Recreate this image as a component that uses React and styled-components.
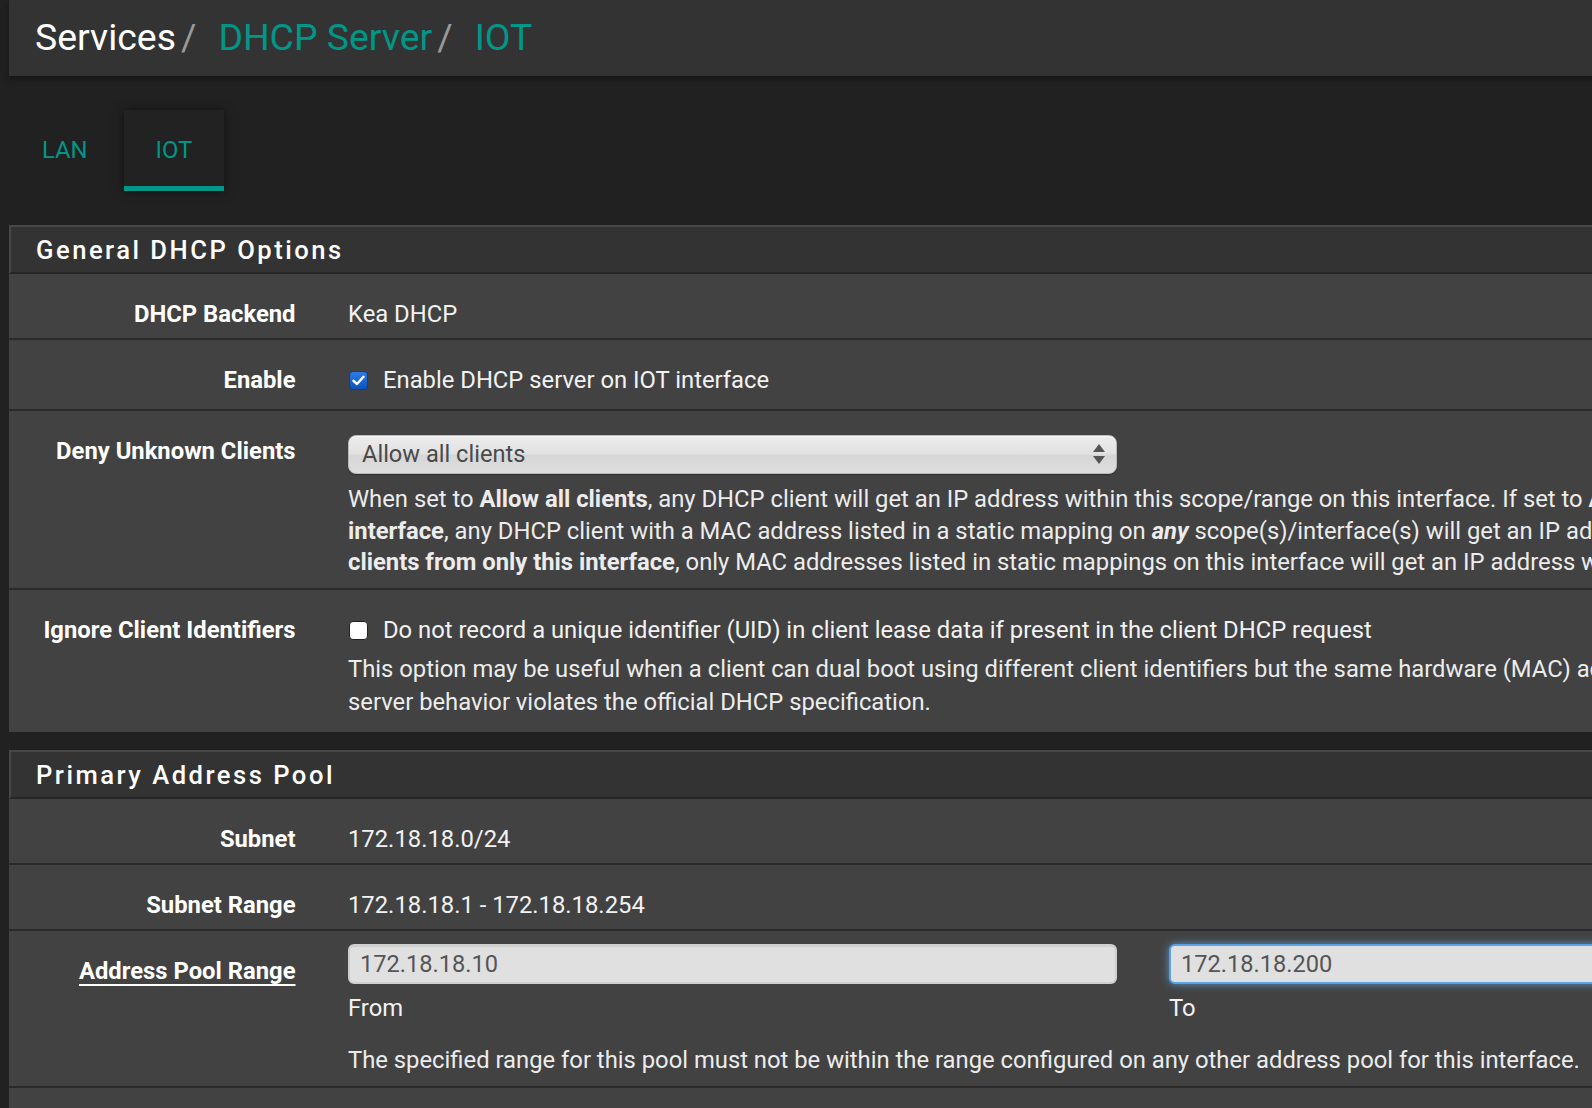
import React from 'react';
import styled, { createGlobalStyle, css } from 'styled-components';

const GlobalStyle = createGlobalStyle`
  html, body {
    margin: 0;
    padding: 0;
    background: #212121;
    overflow: hidden;
  }
  body {
    font-family: Roboto, "Liberation Sans", Arial, sans-serif;
    font-size: 23.8px;
    line-height: 32px;
    color: #ececec;
  }
  * { box-sizing: border-box; }
`;

const TEAL = '#009688';

const Page = styled.div`
  min-width: 2000px;
  min-height: 1108px;
  padding-left: 9px;
  background: #212121;
`;

const HeaderBar = styled.header`
  height: 76px;
  background: #333333;
  display: flex;
  align-items: center;
  padding: 0 0 3px 26px;
  box-shadow: 0 3px 6px rgba(0, 0, 0, 0.35);
  position: relative;
`;

const Crumbs = styled.h1`
  margin: 0;
  font-size: 37.4px;
  font-weight: 400;
  line-height: 44px;
  display: flex;
  align-items: baseline;
`;

const Crumb = styled.span`
  color: ${(p) => (p.$link ? TEAL : '#ffffff')};
`;

const Sep = styled.span`
  color: #9a9a9a;
  margin: 0 22px 0 5px;
`;

const TabNav = styled.nav`
  display: flex;
  gap: 4px;
  margin: 34px 0 34px 1px;
`;

const Tab = styled.div`
  height: 81px;
  padding: 3px 32px 0;
  display: flex;
  align-items: center;
  justify-content: center;
  color: ${TEAL};
  font-size: 23.8px;
  border-bottom: 5px solid transparent;
  ${(p) =>
    p.$active &&
    css`
      background: #222222;
      border-bottom-color: ${TEAL};
      box-shadow: 0 0 10px rgba(0, 0, 0, 0.5);
    `}
`;

const Panel = styled.section`
  margin-bottom: 18px;
  background: #424242;
`;

const PanelHeading = styled.div`
  height: 49px;
  background: #333333;
  border-top: 2px solid #474747;
  border-left: 2px solid #474747;
  border-bottom: 2px solid #262626;
  display: flex;
  align-items: center;
  padding-left: 25px;
`;

const PanelTitle = styled.h2`
  margin: 0;
  font-size: 25.6px;
  font-weight: 500;
  letter-spacing: 2.5px;
  color: #ffffff;
  line-height: 32px;
`;

const Row = styled.div`
  display: grid;
  grid-template-columns: 315px 1fr;
  padding: 13px 0 ${(p) => p.$pb ?? 0}px;
  background: #424242;
  border-bottom: ${(p) => (p.$last ? 'none' : '2px solid #2a2a2a')};
`;

const Label = styled.div`
  text-align: right;
  padding: 11px 28.5px 0 0;
  font-weight: 700;
  color: #ffffff;
  line-height: 32px;
`;

const LabelLink = styled.span`
  text-decoration: underline;
  text-decoration-thickness: 2px;
  text-underline-offset: 5px;
`;

const Value = styled.div`
  padding-left: 24px;
  min-width: 0;
`;

const StaticText = styled.div`
  padding: 11px 0 8px;
  color: #f2f2f2;
`;

const CheckLine = styled.label`
  display: flex;
  align-items: center;
  gap: 15px;
  padding-top: 11px;
  color: #f2f2f2;
`;

const Box = styled.span`
  width: 19px;
  height: 19px;
  margin-left: 1px;
  border-radius: 4px;
  display: inline-flex;
  align-items: center;
  justify-content: center;
  flex-shrink: 0;
  ${(p) =>
    p.$checked
      ? css`
          background: linear-gradient(#2f7be6, #0b52bd);
          border: 1px solid #0a3f94;
        `
      : css`
          background: #ffffff;
          border: 1px solid #222;
        `}
`;

const Help = styled.div`
  margin-top: ${(p) => p.$mt ?? 8}px;
  color: #ececec;
  white-space: nowrap;
  line-height: ${(p) => p.$lh ?? 32}px;
`;

const SelectBox = styled.div`
  width: 769px;
  height: 39px;
  margin-top: 11px;
  border-radius: 8px;
  border: 1px solid #b9b9b9;
  background: linear-gradient(#ececec 0%, #e2e2e2 48%, #d6d6d6 52%, #dedede 100%);
  box-shadow: inset 0 1px 0 rgba(255, 255, 255, 0.7), 0 1px 1px rgba(0, 0, 0, 0.3);
  display: flex;
  align-items: center;
  justify-content: space-between;
  padding: 0 10px 2px 13px;
  color: #4a4a4a;
  font-size: 23.6px;
`;

const InputPair = styled.div`
  display: grid;
  grid-template-columns: 769px 769px;
  column-gap: 52px;
`;

const TextInput = styled.div`
  height: 40px;
  border-radius: 6px;
  background: #e0e0e0;
  border: 2px solid ${(p) => (p.$focus ? '#5aa2e8' : '#cfcfcf')};
  box-shadow: ${(p) =>
    p.$focus ? '0 0 8px rgba(102, 175, 233, 0.75)' : 'inset 0 1px 1px rgba(0,0,0,0.08)'};
  display: flex;
  align-items: center;
  padding-left: 10px;
  color: #555555;
  font-size: 23.6px;
`;

const Caption = styled.div`
  margin-top: 8px;
  color: #f2f2f2;
`;

function Checkbox({ checked }) {
  return (
    <Box $checked={checked}>
      {checked && (
        <svg width="13" height="11" viewBox="0 0 13 11">
          <path d="M1.5 5.8 L5 9 L11.5 1.8" fill="none" stroke="#fff" strokeWidth="2.4" strokeLinecap="round" strokeLinejoin="round" />
        </svg>
      )}
    </Box>
  );
}

function UpDown() {
  return (
    <svg width="14" height="22" viewBox="0 0 14 22">
      <path d="M7 1 L13 9 L1 9 Z" fill="#555" />
      <path d="M7 21 L13 13 L1 13 Z" fill="#555" />
    </svg>
  );
}

export default function App() {
  return (
    <>
      <GlobalStyle />
      <Page>
        <HeaderBar>
          <Crumbs>
            <Crumb>Services</Crumb>
            <Sep>/</Sep>
            <Crumb $link>DHCP Server</Crumb>
            <Sep>/</Sep>
            <Crumb $link>IOT</Crumb>
          </Crumbs>
        </HeaderBar>

        <TabNav>
          <Tab>LAN</Tab>
          <Tab $active>IOT</Tab>
        </TabNav>

        <Panel>
          <PanelHeading>
            <PanelTitle>General DHCP Options</PanelTitle>
          </PanelHeading>

          <Row>
            <Label>DHCP Backend</Label>
            <Value>
              <StaticText>Kea DHCP</StaticText>
            </Value>
          </Row>

          <Row $pb={13}>
            <Label>Enable</Label>
            <Value>
              <CheckLine>
                <Checkbox checked />
                Enable DHCP server on IOT interface
              </CheckLine>
            </Value>
          </Row>

          <Row $pb={9}>
            <Label>Deny Unknown Clients</Label>
            <Value>
              <SelectBox>
                <span>Allow all clients</span>
                <UpDown />
              </SelectBox>
              <Help $mt={10} $lh={31.7}>
                When set to <b>Allow all clients</b>, any DHCP client will get an IP address within this scope/range on this interface. If set to <b>Allow known clients from any</b>
                <br />
                <b>interface</b>, any DHCP client with a MAC address listed in a static mapping on <b><i>any</i></b> scope(s)/interface(s) will get an IP address. If set to <b>Allow known</b>
                <br />
                <b>clients from only this interface</b>, only MAC addresses listed in static mappings on this interface will get an IP address within this scope/range.
              </Help>
            </Value>
          </Row>

          <Row $pb={14} $last>
            <Label>Ignore Client Identifiers</Label>
            <Value>
              <CheckLine>
                <Checkbox />
                Do not record a unique identifier (UID) in client lease data if present in the client DHCP request
              </CheckLine>
              <Help $mt={7} $lh={32.5}>
                This option may be useful when a client can dual boot using different client identifiers but the same hardware (MAC) address. Note that the resulting
                <br />
                server behavior violates the official DHCP specification.
              </Help>
            </Value>
          </Row>
        </Panel>

        <Panel>
          <PanelHeading>
            <PanelTitle>Primary Address Pool</PanelTitle>
          </PanelHeading>

          <Row>
            <Label>Subnet</Label>
            <Value>
              <StaticText>172.18.18.0/24</StaticText>
            </Value>
          </Row>

          <Row>
            <Label>Subnet Range</Label>
            <Value>
              <StaticText>172.18.18.1 - 172.18.18.254</StaticText>
            </Value>
          </Row>

          <Row $pb={10}>
            <Label>
              <LabelLink>Address Pool Range</LabelLink>
            </Label>
            <Value>
              <InputPair>
                <div>
                  <TextInput>172.18.18.10</TextInput>
                  <Caption>From</Caption>
                </div>
                <div>
                  <TextInput $focus>172.18.18.200</TextInput>
                  <Caption>To</Caption>
                </div>
              </InputPair>
              <Help $mt={20}>
                The specified range for this pool must not be within the range configured on any other address pool for this interface.
              </Help>
            </Value>
          </Row>

          <Row $last>
            <Label>&nbsp;</Label>
            <Value>
              <StaticText>&nbsp;</StaticText>
            </Value>
          </Row>
        </Panel>
      </Page>
    </>
  );
}
